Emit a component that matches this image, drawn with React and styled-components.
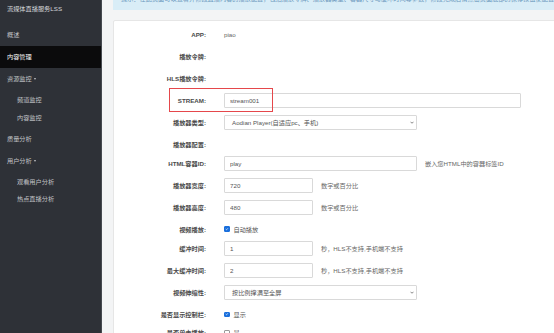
import React from 'react'
import styled, { createGlobalStyle } from 'styled-components'

const GlobalStyle = createGlobalStyle`
  html, body {
    margin: 0;
    padding: 0;
    width: 554px;
    height: 333px;
    overflow: hidden;
    background: #f3f4f5;
  }
  body {
    font-family: "Liberation Sans", Arial, "Noto Sans CJK SC", sans-serif;
    font-size: 6.2px;
  }
`

const Layout = styled.div`
  display: flex;
  width: 660px;
  height: 333px;
  overflow: hidden;
`

const Sidebar = styled.nav`
  flex: none;
  width: 101px;
  border-right: 1px solid #464a50;
  background: #2e3137;
  color: #c2c4c7;
`

const Brand = styled.div`
  height: 24px;
  line-height: 18px;
  padding-left: 7px;
  color: #d4d6d9;
`

const NavItem = styled.div`
  height: 22px;
  line-height: 22px;
  padding-left: 7px;
  background: ${({ $active }) => ($active ? '#0b0b0c' : 'transparent')};
  color: ${({ $active }) => ($active ? '#ffffff' : '#c2c4c7')};
`

const SubMenu = styled.div`
  padding: 1px 0 1.5px;
`

const SubItem = styled.div`
  height: 17.5px;
  line-height: 17.5px;
  padding-left: 17px;
`

const Caret = styled.span`
  display: inline-block;
  margin-left: 2px;
  vertical-align: middle;
  border-left: 1.5px solid transparent;
  border-right: 1.5px solid transparent;
  border-top: 2px solid currentColor;
`

const Main = styled.main`
  flex: 1;
  display: flex;
  flex-direction: column;
  margin-top: -6px;
  padding-left: 11px;
  min-width: 0;
`

const Alert = styled.div`
  flex: none;
  background: #d9edf7;
  color: #6a98bd;
  line-height: 9px;
  padding: 0 8px 7px;
  white-space: nowrap;
  overflow: hidden;
`

const Card = styled.section`
  flex: none;
  margin-top: 9.5px;
  padding-top: 6px;
  background: #ffffff;
  border: 1px solid #e6e6e6;
  border-radius: 2px;
`

const Row = styled.div`
  position: relative;
  display: flex;
  align-items: center;
  height: 15px;
  margin-bottom: ${({ $gap }) => $gap}px;
`

const Label = styled.div`
  flex: none;
  width: 92px;
  margin-right: 18px;
  text-align: right;
  font-weight: bold;
  color: #4a4a4a;
  white-space: nowrap;
`

const Control = styled.div`
  display: flex;
  align-items: center;
  color: #555555;
`

const Static = styled.span`
  color: #666666;
`

const Input = styled.input`
  box-sizing: border-box;
  width: ${({ $w }) => $w}px;
  height: 15px;
  margin: 0;
  padding: 0 5px;
  border: 1px solid #d9d9d9;
  border-radius: 1px;
  font: inherit;
  color: #555555;
  background: #ffffff;
  outline: none;
`

const Select = styled.div`
  box-sizing: border-box;
  display: flex;
  align-items: center;
  justify-content: space-between;
  width: 193px;
  height: 15px;
  padding: 0 2px 0 7px;
  border: 1px solid #d9d9d9;
  border-radius: 1px;
  color: #555555;
`

const Hint = styled.span`
  margin-left: 8px;
  color: #666666;
  white-space: nowrap;
`

const Box = styled.span`
  box-sizing: border-box;
  display: inline-flex;
  align-items: center;
  justify-content: center;
  width: 5.5px;
  height: 5.5px;
  margin-right: 4px;
  border-radius: 1px;
  border: 1px solid ${({ $on }) => ($on ? '#1a6fdc' : '#9a9a9a')};
  background: ${({ $on }) => ($on ? '#1a6fdc' : '#ffffff')};
`

const Mark = styled.div`
  position: absolute;
  left: 55px;
  top: -4.2px;
  width: 103.5px;
  height: 23.4px;
  box-sizing: border-box;
  border: 1.5px solid #e5474b;
  pointer-events: none;
`

const Chevron = () => (
  <svg width="4" height="3" viewBox="0 0 8 5">
    <path d="M1 1l3 3 3-3" fill="none" stroke="#555" strokeWidth="1.4" />
  </svg>
)

const Tick = () => (
  <svg width="4" height="4" viewBox="0 0 10 10">
    <path d="M2 5.2l2.2 2.2L8.2 3" fill="none" stroke="#fff" strokeWidth="2" />
  </svg>
)

const rows = [
  { label: 'APP', text: 'piao' },
  { label: '播放令牌' },
  { label: 'HLS播放令牌' },
  { label: 'STREAM', input: 'stream001', w: 297, mark: true },
  { label: '播放器类型', select: 'Aodian Player(自适应pc、手机)' },
  { label: '播放器配置', gap: 4.2 },
  { label: 'HTML容器ID', input: 'play', w: 193, hint: '嵌入您HTML中的容器标签ID' },
  { label: '播放器宽度', input: '720', w: 89, hint: '数字或百分比' },
  { label: '播放器高度', input: '480', w: 89, hint: '数字或百分比' },
  { label: '视频播放', check: '自动播放', checked: true, gap: 4.2 },
  { label: '缓冲时间', input: '1', w: 89, hint: '秒，HLS不支持,手机端不支持' },
  { label: '最大缓冲时间', input: '2', w: 89, hint: '秒，HLS不支持,手机端不支持' },
  { label: '视频伸缩性', select: '按比例撑满至全屏' },
  { label: '是否显示控制栏', check: '显示', checked: true, gap: 3 },
  { label: '是否单击播放', check: '是', checked: false },
]

const App = () => (
  <>
    <GlobalStyle />
    <Layout>
      <Sidebar>
        <Brand>流媒体直播服务LSS</Brand>
        <NavItem>概述</NavItem>
        <NavItem $active>内容管理</NavItem>
        <NavItem>资源监控<Caret /></NavItem>
        <SubMenu>
          <SubItem>频道监控</SubItem>
          <SubItem>内容监控</SubItem>
        </SubMenu>
        <NavItem>质量分析</NavItem>
        <NavItem>用户分析<Caret /></NavItem>
        <SubMenu>
          <SubItem>观看用户分析</SubItem>
          <SubItem>热点直播分析</SubItem>
        </SubMenu>
      </Sidebar>
      <Main>
        <Alert>
          提示：在此页面可以查看并修改直播内容的播放配置，包括播放令牌、播放器类型、容器尺寸与缓冲时间等参数，修改完成后请点击页面底部的保存按钮使配置生效，生成的播放代码可以直接复制并嵌入到您自己的网页中使用，如有疑问请联系客服。
        </Alert>
        <Card>
          {rows.map((row, index) => (
            <Row key={index} $gap={row.gap ?? 7}>
              <Label>{row.label}:</Label>
              <Control>
                {row.text && <Static>{row.text}</Static>}
                {row.input && <Input $w={row.w} value={row.input} readOnly />}
                {row.select && (
                  <Select>
                    <span>{row.select}</span>
                    <Chevron />
                  </Select>
                )}
                {row.check && (
                  <>
                    <Box $on={row.checked}>{row.checked && <Tick />}</Box>
                    <span>{row.check}</span>
                  </>
                )}
                {row.hint && <Hint>{row.hint}</Hint>}
              </Control>
              {row.mark && <Mark />}
            </Row>
          ))}
        </Card>
      </Main>
    </Layout>
  </>
)

export default App
